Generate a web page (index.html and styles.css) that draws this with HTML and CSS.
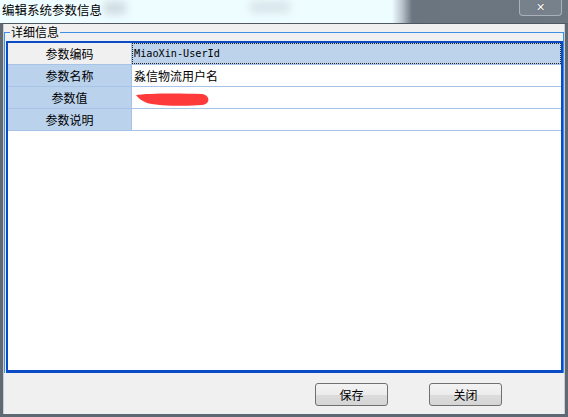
FILE: index.html
```html
<!DOCTYPE html>
<html lang="zh-CN">
<head>
  <meta charset="UTF-8">
  <title>编辑系统参数信息</title>
  <link rel="stylesheet" href="styles.css">
</head>
<body>
  <div class="window">
    <div class="title-bar">
      <span class="title">编辑系统参数信息</span>
      <span class="blur blur-a"></span>
      <span class="blur blur-b"></span>
      <button class="close-btn" type="button">&#x2715;</button>
    </div>

    <div class="frame">
      <fieldset class="group">
        <legend>详细信息</legend>
        <div class="grid">
          <div class="row current">
            <div class="head">参数编码</div>
            <div class="cell mono"><span class="focus">MiaoXin-UserId</span></div>
          </div>
          <div class="row">
            <div class="head">参数名称</div>
            <div class="cell">淼信物流用户名</div>
          </div>
          <div class="row">
            <div class="head">参数值</div>
            <div class="cell">
              <svg class="scribble" width="76" height="16" viewBox="0 0 76 16">
                <path d="M1 4 C 10 2.5, 40 2, 67 3 C 75 4, 76 13, 67 14 C 50 15.5, 24 15, 12 12 C 7 10, 3 7, 1 4 Z" fill="#ff3a3a"/>
              </svg>
            </div>
          </div>
          <div class="row">
            <div class="head">参数说明</div>
            <div class="cell"></div>
          </div>
        </div>
      </fieldset>

      <div class="actions">
        <button class="btn" type="button">保存</button>
        <button class="btn" type="button">关闭</button>
      </div>
    </div>
  </div>
</body>
</html>
```

FILE: styles.css
```css
body {
  margin: 0;
  padding: 0;
  width: 568px;
  height: 417px;
  overflow: hidden;
  font-family: "Noto Sans CJK SC", "Liberation Sans", sans-serif;
  font-size: 12px;
  color: #000;
  background-color: #f0f0f0;
}

.window {
  display: flex;
  flex-direction: column;
  height: 417px;
}

.title-bar {
  position: relative;
  height: 23px;
  flex-shrink: 0;
  background: linear-gradient(to right, #eefdff 0, #eefdff 392px, #b9c4cc 402px, #6a7580 412px, #6b7681 100%);
}

.title {
  position: relative;
  display: block;
  padding: 1px 0 0 2px;
  font-size: 12.5px;
  line-height: 18px;
  z-index: 1;
}

.blur {
  position: absolute;
  top: 2px;
  height: 12px;
  background-color: #b8c2cc;
  filter: blur(4px);
  opacity: 0.6;
}

.blur-a { left: 104px; width: 22px; }
.blur-b { left: 250px; width: 40px; top: 1px; opacity: 0.4; }

.close-btn {
  position: absolute;
  top: 0;
  right: 6px;
  width: 43px;
  height: 16px;
  padding: 0;
  border: 1px solid #a8b1ba;
  border-top: none;
  border-radius: 0 0 4px 4px;
  background-color: #77818b;
  color: #fff;
  font-family: "DejaVu Sans", sans-serif;
  font-size: 11px;
  font-weight: bold;
  line-height: 14px;
  text-shadow: 0 0 1px #333;
}

.frame {
  flex: 1;
  display: flex;
  flex-direction: column;
  border: 3px solid #5f6973;
  border-top: 1px solid #4f5861;
  box-shadow: inset 1px 0 #c9ced3, inset -1px 0 #c9ced3;
}

.group {
  flex: 1;
  display: flex;
  flex-direction: column;
  margin: 1px 1px 0 1px;
  padding: 2px 0 0 1px;
  border: 1px solid #3d8ee6;
  border-bottom: none;
  min-width: 0;
}

.group legend {
  margin-left: 4px;
  padding: 0 1px;
  font-size: 12px;
  line-height: 14px;
}

.grid {
  flex: 1;
  background-color: #fff;
  border: 2px solid #0b4bc6;
  border-bottom-width: 3px;
}

.row {
  display: flex;
  height: 21px;
  border-bottom: 1px solid #a7c3e6;
}

.head {
  width: 123px;
  flex-shrink: 0;
  background-color: #bad2ec;
  border-right: 1px solid #a7c3e6;
  text-align: center;
  line-height: 21px;
}

.current .head {
  background-color: #f0f0f0;
}

.cell {
  flex: 1;
  display: flex;
  align-items: center;
  padding-left: 2px;
  line-height: 21px;
}

.current .cell {
  padding: 0;
}

.focus {
  flex: 1;
  align-self: stretch;
  padding-left: 1px;
  background-color: #bcd3eb;
  border: 1px dotted #222;
  line-height: 19px;
}

.mono {
  font-family: "DejaVu Sans Mono", "Liberation Mono", monospace;
  font-size: 10.2px;
}

.scribble {
  display: block;
  margin: 3px 0 0 1px;
}

.actions {
  height: 41px;
  flex-shrink: 0;
  display: flex;
  align-items: center;
  justify-content: flex-end;
  gap: 41px;
  padding-right: 63px;
  padding-top: 2px;
  box-sizing: border-box;
}

.btn {
  width: 73px;
  height: 23px;
  padding: 0;
  border: 1px solid #707070;
  border-radius: 3px;
  background: linear-gradient(to bottom, #f3f3f3 0, #ececec 50%, #dcdcdc 51%, #d5d5d5 100%);
  font-family: "Noto Sans CJK SC", sans-serif;
  font-size: 12px;
  color: #000;
}
```
